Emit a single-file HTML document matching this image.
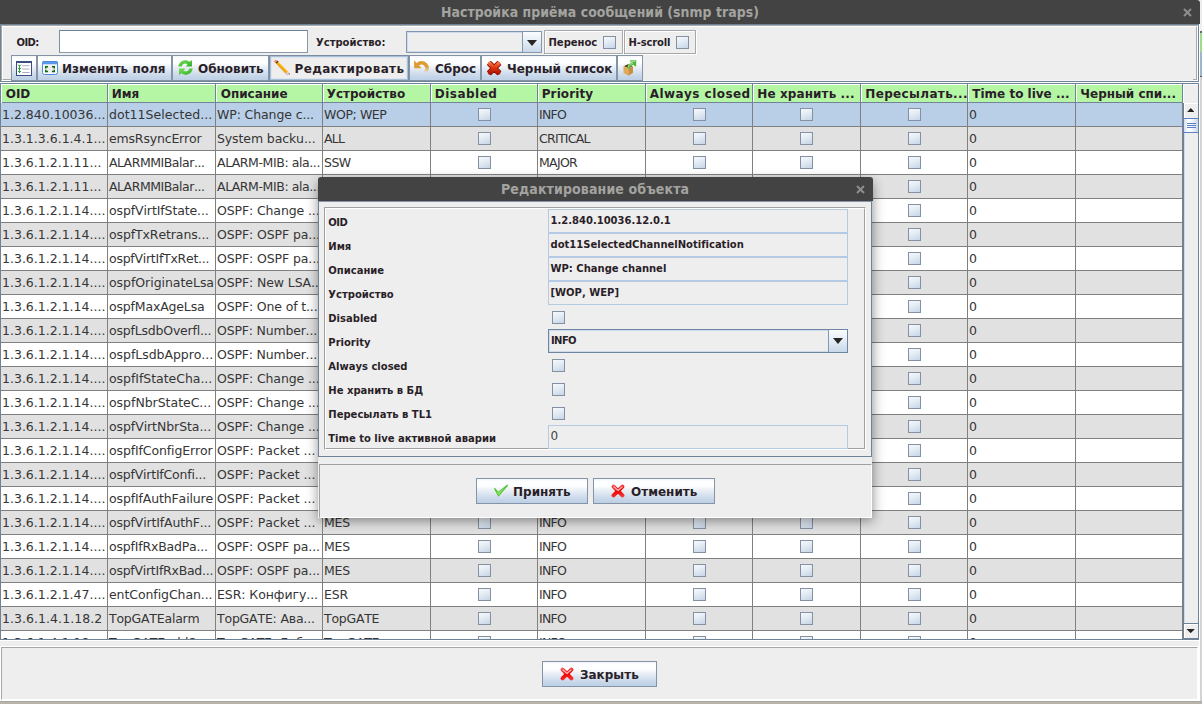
<!DOCTYPE html>
<html lang="ru"><head><meta charset="utf-8"><title>Настройка приёма сообщений (snmp traps)</title>
<style>
*{box-sizing:border-box;margin:0;padding:0}
html,body{width:1202px;height:704px;overflow:hidden}
body{position:relative;font-kerning:none;font-variant-ligatures:none;background:#c4c4c4;font-family:"DejaVu Sans","Liberation Sans",sans-serif;color:#2a1e28;font-size:12px}
.abs{position:absolute}
#win{position:absolute;left:0;top:0;width:1200px;height:701px;background:#eeeeee;overflow:hidden}
.titlebar{position:absolute;left:0;top:0;width:1200px;height:24px;background:#434343;border-radius:0 3px 0 0;color:#a3a3a0;font-family:'DejaVu Sans Condensed','DejaVu Sans',sans-serif;font-weight:bold;font-size:13.900px;letter-spacing:0.050px;line-height:24px;white-space:nowrap}
.titlebar span{position:absolute;left:441px;top:0}
.closex{position:absolute;width:9px;height:9px}
.lbl{position:absolute;font-weight:bold;font-size:10px;line-height:12px;white-space:nowrap;color:#2a1e28}
.btn{position:absolute;height:26px;border:1px solid #8493a6;background:linear-gradient(#f2f5f9 0%,#fdfeff 10%,#fdfeff 30%,#eff3f8 42%,#dfe8f2 58%,#cfdcec 75%,#c3d4e8 90%,#bdd0e6 100%);font-weight:bold;font-size:12px;line-height:26px;white-space:nowrap;color:#2a1e28}
.btn span{position:absolute;top:0}
.btn svg{position:absolute}
.cb{display:block;width:13px;height:13px;border:1px solid #8391a3;background:linear-gradient(160deg,#f7f9fc 0%,#e3ebf4 45%,#c6d5e7 100%)}
/* table */
.tbl{position:absolute;left:0;top:83px;width:1199px;height:557px;border:1px solid #6f8397;background:#fff;overflow:hidden}
.thead{position:absolute;left:0;top:0;height:19px;width:1197px;background:#eee;border-top:1px solid #fff;border-left:1px solid #fff}
.th{position:absolute;top:-1px;height:19px;background:#b5f6a5;border-right:1px solid #6f8397;border-bottom:1px solid #72839a;box-shadow:inset 0 1px 0 #fff;font-weight:bold;font-size:12px;line-height:17px;white-space:nowrap;overflow:hidden;color:#2a1e28}
.th+.th{box-shadow:inset 1px 1px 0 #fff}
.th span{position:absolute;left:3.700px;top:2px}
.tr{position:absolute;left:0;height:24px;width:1182px}
.tr.even{background:#ffffff}
.tr.odd{background:#e1e1e1}
.tr.sel{background:#b9cfe7}
.td{position:absolute;top:0;height:24px;border-right:1px solid #808080;border-bottom:1px solid #808080;font-size:12.5px;line-height:23px;white-space:nowrap;overflow:hidden;color:#353535}
.td span{position:absolute;left:1px;top:0}
.td.c .cb{position:absolute;left:47px;top:5px}
#desk{position:absolute;left:0;top:0;width:1202px;height:704px;background:linear-gradient(#eee 0,#eee 31px,#667 31px,#667 33px,#9fdc90 33px,#9fdc90 52px,#9db5d0 52px,#9db5d0 76px,#555 76px,#555 77px,#d4d4d4 77px) 1200px 0/2px 701px no-repeat,linear-gradient(#a8a8a4,#a8a8a4) 0 701px/1202px 1px no-repeat,#b8b4aa}
.combo{position:absolute;border:1px solid #8297b0;background:#eeeeee;box-shadow:inset 0 0 0 1px #cfdbe8}
.combo .arr{position:absolute;right:0;top:0;bottom:0;width:19px;border-left:1px solid #8297b0;background:linear-gradient(#fbfcfe,#e4ecf5 50%,#c9d8ea)}
.combo .arr:after{content:"";position:absolute;left:4px;top:8px;border:5.500px solid transparent;border-top:6px solid #262626;border-bottom:0}
.etch{position:absolute;border:1px solid #a8a8a8;box-shadow:inset 1px 1px 0 #fff,1px 1px 0 #fff}
.btn.foc{background:#eeeeee;border-color:#7b8da2;box-shadow:inset 0 0 0 1px #a8c0da,inset 0 0 0 2px #dde5ee}
#dlg{position:absolute;left:318px;top:177px;width:555px;height:341px}
#dlg:before{content:"";position:absolute;left:1px;top:3px;right:1px;bottom:0;box-shadow:0 2px 12px 1px rgba(0,0,0,0.42);border-radius:4px 4px 0 0}
.dtitle{position:absolute;left:0;top:0;width:555px;height:24px;background:#434343;border-radius:3px 3px 0 0;color:#a3a3a0;font-family:'DejaVu Sans Condensed','DejaVu Sans',sans-serif;font-weight:bold;font-size:14px;letter-spacing:0.120px;line-height:24px;white-space:nowrap}
.dtitle span{position:absolute;left:183px;top:0}
.dbody{position:absolute;left:0;top:24px;width:554px;height:256px;background:#eee;border:1px solid #6f8397;border-top-color:#8495a8}
.dfoot{position:absolute;left:0;top:280px;width:554px;height:61px;background:#eee}
.fld{position:absolute;left:229px;width:300px;height:24px;border:1px solid #b4cbe3;margin-top:0}
.fld span{position:absolute;left:1.500px;top:5px;font-weight:bold;font-size:10px;line-height:12px;white-space:nowrap;color:#2a1e28}

</style></head>
<body>
<div id="desk"></div>
<div id="win">
<div class="abs" style="left:1199px;top:24px;width:1px;height:677px;background:#fff"></div>
<div class="titlebar"><span>Настройка приёма сообщений (snmp traps)</span>
<svg class="closex" style="left:1183px;top:8px" viewBox="0 0 9 9"><path d="M1 1L8 8M8 1L1 8" stroke="#8e8e8c" stroke-width="2" fill="none"/></svg>
</div>
<!-- top panel -->
<div class="abs" style="left:0;top:24px;width:1199px;height:58px;border:1px solid #6f8397"></div>
<div class="abs" style="left:1px;top:25px;width:1197px;height:56px;border:1px solid;border-color:#a8a8a8 #fff #fff #a8a8a8"></div>
<div class="abs" style="left:2px;top:26px;width:1195px;height:54px;border:1px solid;border-color:#fff #a8a8a8 #a8a8a8 #fff"></div>
<div class="abs" style="left:11px;top:55px;width:1182px;height:26px;background:#eee;border-bottom:1px solid #f6f6f6"></div>
<div class="lbl" style="left:16.500px;top:36.500px;letter-spacing:-0.600px">OID:</div>
<div class="abs" style="left:59px;top:30px;width:249px;height:23px;background:#fff;border:1px solid #8a98a8;border-top-color:#6c7f93;border-left-color:#7a8c9f"></div>
<div class="lbl" style="left:316px;top:36.500px">Устройство:</div>
<div class="combo" style="left:406px;top:31px;width:136px;height:22px"><i class="arr"></i></div>
<div class="etch" style="left:544px;top:30px;width:79px;height:24px"></div>
<div class="lbl" style="left:548.500px;top:36.500px">Перенос</div>
<i class="cb abs" style="left:603px;top:36px"></i>
<div class="etch" style="left:624px;top:30px;width:72px;height:24px"></div>
<div class="lbl" style="left:628.500px;top:36.500px;letter-spacing:-0.150px">H-scroll</div>
<i class="cb abs" style="left:676px;top:36px"></i>
<!-- toolbar -->
<div class="btn" style="left:11px;top:55px;width:26px">
<svg style="left:4px;top:5px" width="16" height="16" viewBox="0 0 16 16"><rect x="0.5" y="0.5" width="15" height="14" fill="#fff" stroke="#3d4b7d"/><rect x="0" y="0" width="16" height="2" fill="#3d4b7d"/><g stroke="#aaa9c9" stroke-width="1"><path d="M6.200 4.700h7.300M6.200 8h7.300M6.200 11.500h7.300"/></g><g stroke="#0b8a1c" stroke-width="0.900" fill="none"><path d="M2.100 3.700l1.400 1.500 1.400-1.500M2.100 6.900l1.400 1.500 1.400-1.500M2.100 10.100l1.400 1.500 1.400-1.500"/><path d="M3.500 4.500v7.500" stroke-width="0.800"/></g></svg></div>
<div class="btn" style="left:37px;top:55px;width:135px">
<svg style="left:4px;top:5px" width="16" height="14" viewBox="0 0 16 14"><rect x="0.5" y="0.5" width="15" height="13" rx="2" fill="#fff" stroke="#4a8be0"/><rect x="0.5" y="0.5" width="15" height="2.300" rx="1" fill="#5a9bef" stroke="#4a8be0"/><rect x="2.500" y="4.300" width="11" height="7.400" fill="#ececec"/><path d="M3.700 7.400v-1.700h2.300M12.300 7.400v-1.700h-2.300M3.700 8.800v1.700h2.300M12.300 8.800v1.700h-2.300" fill="none" stroke="#0a6a0a" stroke-width="1.400"/></svg>
<span style="left:24px">Изменить поля</span></div>
<div class="btn" style="left:172px;top:55px;width:97px">
<svg style="left:4.500px;top:4px" width="15" height="15" viewBox="0 0 15 15"><defs><linearGradient id="gg" x1="0" y1="0" x2="1" y2="1"><stop offset="0" stop-color="#7be05a"/><stop offset="1" stop-color="#2fae22"/></linearGradient></defs><g fill="url(#gg)"><path d="M0.300 6.600C0.800 2.800 3.800 0.300 7.300 0.300c1.700 0 3.100 0.600 4.200 1.500L14 0v6.600H7.600l2-2.200C9 3.900 8.200 3.600 7.300 3.600 5.600 3.600 4.200 4.700 3.700 6.600z"/><path d="M14.700 8.400C14.200 12.200 11.200 14.700 7.700 14.700c-1.700 0-3.100-0.600-4.200-1.500L1 15V8.400h6.400l-2 2.200c0.600 0.500 1.400 0.800 2.300 0.800 1.700 0 3.100-1.100 3.600-3z"/></g></svg>
<span style="left:25px">Обновить</span></div>
<div class="btn foc" style="left:269px;top:55px;width:140px">
<svg style="left:4px;top:3.400px" width="17" height="17" viewBox="0 0 17 17"><path d="M5 7l9 9" stroke="#bbb" stroke-width="2" opacity="0.6"/><path d="M2 2.500l11 11" stroke="#f3a400" stroke-width="3"/><path d="M2.600 1.900l11 11" stroke="#ffd24a" stroke-width="1"/><circle cx="1.800" cy="2.200" r="1.500" fill="#f58a6a"/><path d="M2.200 4.200l2-2" stroke="#333" stroke-width="1.200"/><path d="M12 14l2-2 1.800 3.800z" fill="#f1c9a0"/><path d="M14.500 14.700l0.800-0.800 0.700 2z" fill="#444"/></svg>
<span style="left:24.500px;letter-spacing:0.350px">Редактировать</span></div>
<div class="btn" style="left:409px;top:55px;width:72px">
<svg style="left:2px;top:2px" width="20" height="18" viewBox="0 0 20 18"><defs><linearGradient id="ug" gradientUnits="userSpaceOnUse" x1="0" y1="8.500" x2="0" y2="15.500"><stop offset="0" stop-color="#dd9b31"/><stop offset="1" stop-color="#e6a840" stop-opacity="0"/></linearGradient></defs><path d="M5.600 6.400A5.500 5.500 0 1 1 13.500 14.300" fill="none" stroke="url(#ug)" stroke-width="3.600"/><path d="M2.100 2.300V10.200H9.600z" fill="#dd9b31"/></svg>
<span style="left:25px">Сброс</span></div>
<div class="btn" style="left:481px;top:55px;width:136px">
<svg style="left:4px;top:4px" width="16" height="16" viewBox="0 0 16 16"><g transform="translate(8.150 8.100) rotate(45)"><path d="M-6.900 -2.300h4.600v-4.600h4.600v4.600h4.600v4.600h-4.600v4.600h-4.600v-4.600h-4.600z" fill="#e53c17" stroke="#8c0f00" stroke-width="1.300" stroke-linejoin="round"/></g><path d="M3.700 3.600L12.600 12.600M12.600 3.600L3.700 12.600" fill="none" stroke="url(#rxg)" stroke-width="3.900" stroke-linecap="round"/></svg>
<span style="left:25px">Черный список</span></div>
<div class="btn" style="left:617px;top:55px;width:26px">
<svg style="left:5px;top:4px" width="14" height="17" viewBox="0 0 14 17"><path d="M0.500 6.200L5 4.200 10 6.200 5.500 8.500z" fill="#5e3d17"/><path d="M0.500 6.200L5.500 8.500V15.700L0.500 12.700z" fill="#e0a955"/><path d="M5.500 8.500L10 6.200V12.700L5.500 15.700z" fill="#c98d3c"/><path d="M0.500 6.200L5.500 8.500 10 6.200" fill="none" stroke="#f0cf8a" stroke-width="0.500"/><path d="M4.300 8.300C4.300 5 6 3.300 8.600 2.900L6.900 1.200 7.300 0.200H13.200V6.100L12.200 6.500 10.500 4.800C8.500 5.200 7.300 6.400 6.900 8.900z" fill="#4fb83a"/><path d="M5.200 7.600C5.500 5.300 7 4 9.500 3.700L8.300 1.300H12.200" fill="none" stroke="#b9eaa6" stroke-width="0.900"/></svg></div>
<!-- separators row 81/82 -->
<div class="abs" style="left:0;top:82px;width:1199px;height:1px;background:#fff"></div>
<svg width="0" height="0" style="position:absolute"><defs>
<linearGradient id="rxg" gradientUnits="userSpaceOnUse" x1="0" y1="1" x2="0" y2="15"><stop offset="0" stop-color="#f58a62"/><stop offset="0.450" stop-color="#e23a12"/><stop offset="1" stop-color="#a50a00"/></linearGradient>
<g id="redx"><path d="M3.600 1.200L7.500 4.800 11.400 1.200 13.800 3.600 10.200 7.500 13.800 11.400 11.400 13.800 7.500 10.200 3.600 13.800 1.200 11.400 4.800 7.500 1.200 3.600z" fill="url(#rxg)" stroke="#8a0e00" stroke-width="1.300" stroke-linejoin="round"/></g>
</defs></svg>
<div class="tbl">
<div class="thead"><div class="th" style="left:0px;width:106px"><span>OID</span></div><div class="th" style="left:106px;width:108px"><span>Имя</span></div><div class="th" style="left:214px;width:107px"><span style="left:4.7px;">Описание</span></div><div class="th" style="left:321px;width:108px"><span>Устройство</span></div><div class="th" style="left:429px;width:107px"><span style="letter-spacing:0.5px;">Disabled</span></div><div class="th" style="left:536px;width:108px"><span style="letter-spacing:0.12px;">Priority</span></div><div class="th" style="left:644px;width:107px"><span style="letter-spacing:0.45px;">Always closed</span></div><div class="th" style="left:751px;width:108px"><span style="left:4.3px;letter-spacing:0.1px;">Не хранить ...</span></div><div class="th" style="left:859px;width:107px"><span style="left:4.3px;letter-spacing:0.35px;">Пересылать...</span></div><div class="th" style="left:966px;width:108px"><span style="left:4.3px;">Time to live ...</span></div><div class="th" style="left:1074px;width:107px"><span style="left:4.3px;">Черный спи...</span></div></div>
<div class="tr sel" style="top:19px"><div class="td" style="left:0px;width:107px"><span>1.2.840.10036...</span></div><div class="td" style="left:107px;width:108px"><span style="letter-spacing:0.044px">dot11Selected...</span></div><div class="td" style="left:215px;width:107px"><span style="letter-spacing:-0.115px">WP: Change c...</span></div><div class="td" style="left:322px;width:108px"><span style="letter-spacing:-0.402px">WOP; WEP</span></div><div class="td c" style="left:430px;width:107px"><i class="cb"></i></div><div class="td" style="left:537px;width:108px"><span style="letter-spacing:-0.72px">INFO</span></div><div class="td c" style="left:645px;width:107px"><i class="cb"></i></div><div class="td c" style="left:752px;width:108px"><i class="cb"></i></div><div class="td c" style="left:860px;width:107px"><i class="cb"></i></div><div class="td" style="left:967px;width:108px"><span style="letter-spacing:-0.453px">0</span></div><div class="td" style="left:1075px;width:107px"></div></div>
<div class="tr odd" style="top:43px"><div class="td" style="left:0px;width:107px"><span>1.3.1.3.6.1.4.1...</span></div><div class="td" style="left:107px;width:108px"><span style="letter-spacing:-0.172px">emsRsyncError</span></div><div class="td" style="left:215px;width:107px"><span style="letter-spacing:-0.109px">System backu...</span></div><div class="td" style="left:322px;width:108px"><span style="letter-spacing:-0.761px">ALL</span></div><div class="td c" style="left:430px;width:107px"><i class="cb"></i></div><div class="td" style="left:537px;width:108px"><span style="letter-spacing:-0.734px">CRITICAL</span></div><div class="td c" style="left:645px;width:107px"><i class="cb"></i></div><div class="td c" style="left:752px;width:108px"><i class="cb"></i></div><div class="td c" style="left:860px;width:107px"><i class="cb"></i></div><div class="td" style="left:967px;width:108px"><span style="letter-spacing:-0.453px">0</span></div><div class="td" style="left:1075px;width:107px"></div></div>
<div class="tr even" style="top:67px"><div class="td" style="left:0px;width:107px"><span>1.3.6.1.2.1.11...</span></div><div class="td" style="left:107px;width:108px"><span style="letter-spacing:-0.464px">ALARMMIBalar...</span></div><div class="td" style="left:215px;width:107px"><span style="letter-spacing:-0.412px">ALARM-MIB: ala...</span></div><div class="td" style="left:322px;width:108px"><span style="letter-spacing:-0.511px">SSW</span></div><div class="td c" style="left:430px;width:107px"><i class="cb"></i></div><div class="td" style="left:537px;width:108px"><span style="letter-spacing:-0.709px">MAJOR</span></div><div class="td c" style="left:645px;width:107px"><i class="cb"></i></div><div class="td c" style="left:752px;width:108px"><i class="cb"></i></div><div class="td c" style="left:860px;width:107px"><i class="cb"></i></div><div class="td" style="left:967px;width:108px"><span style="letter-spacing:-0.453px">0</span></div><div class="td" style="left:1075px;width:107px"></div></div>
<div class="tr odd" style="top:91px"><div class="td" style="left:0px;width:107px"><span>1.3.6.1.2.1.11...</span></div><div class="td" style="left:107px;width:108px"><span style="letter-spacing:-0.464px">ALARMMIBalar...</span></div><div class="td" style="left:215px;width:107px"><span style="letter-spacing:-0.412px">ALARM-MIB: ala...</span></div><div class="td" style="left:322px;width:108px"><span style="letter-spacing:-0.511px">SSW</span></div><div class="td c" style="left:430px;width:107px"><i class="cb"></i></div><div class="td" style="left:537px;width:108px"><span style="letter-spacing:-0.709px">MAJOR</span></div><div class="td c" style="left:645px;width:107px"><i class="cb"></i></div><div class="td c" style="left:752px;width:108px"><i class="cb"></i></div><div class="td c" style="left:860px;width:107px"><i class="cb"></i></div><div class="td" style="left:967px;width:108px"><span style="letter-spacing:-0.453px">0</span></div><div class="td" style="left:1075px;width:107px"></div></div>
<div class="tr even" style="top:115px"><div class="td" style="left:0px;width:107px"><span>1.3.6.1.2.1.14....</span></div><div class="td" style="left:107px;width:108px"><span style="letter-spacing:-0.109px">ospfVirtIfState...</span></div><div class="td" style="left:215px;width:107px"><span style="letter-spacing:-0.121px">OSPF: Change ...</span></div><div class="td" style="left:322px;width:108px"><span style="letter-spacing:-0.208px">MES</span></div><div class="td c" style="left:430px;width:107px"><i class="cb"></i></div><div class="td" style="left:537px;width:108px"><span style="letter-spacing:-0.72px">INFO</span></div><div class="td c" style="left:645px;width:107px"><i class="cb"></i></div><div class="td c" style="left:752px;width:108px"><i class="cb"></i></div><div class="td c" style="left:860px;width:107px"><i class="cb"></i></div><div class="td" style="left:967px;width:108px"><span style="letter-spacing:-0.453px">0</span></div><div class="td" style="left:1075px;width:107px"></div></div>
<div class="tr odd" style="top:139px"><div class="td" style="left:0px;width:107px"><span>1.3.6.1.2.1.14....</span></div><div class="td" style="left:107px;width:108px"><span style="letter-spacing:-0.111px">ospfTxRetrans...</span></div><div class="td" style="left:215px;width:107px"><span style="letter-spacing:-0.112px">OSPF: OSPF pa...</span></div><div class="td" style="left:322px;width:108px"><span style="letter-spacing:-0.208px">MES</span></div><div class="td c" style="left:430px;width:107px"><i class="cb"></i></div><div class="td" style="left:537px;width:108px"><span style="letter-spacing:-0.72px">INFO</span></div><div class="td c" style="left:645px;width:107px"><i class="cb"></i></div><div class="td c" style="left:752px;width:108px"><i class="cb"></i></div><div class="td c" style="left:860px;width:107px"><i class="cb"></i></div><div class="td" style="left:967px;width:108px"><span style="letter-spacing:-0.453px">0</span></div><div class="td" style="left:1075px;width:107px"></div></div>
<div class="tr even" style="top:163px"><div class="td" style="left:0px;width:107px"><span>1.3.6.1.2.1.14....</span></div><div class="td" style="left:107px;width:108px"><span style="letter-spacing:-0.261px">ospfVirtIfTxRet...</span></div><div class="td" style="left:215px;width:107px"><span style="letter-spacing:-0.112px">OSPF: OSPF pa...</span></div><div class="td" style="left:322px;width:108px"><span style="letter-spacing:-0.208px">MES</span></div><div class="td c" style="left:430px;width:107px"><i class="cb"></i></div><div class="td" style="left:537px;width:108px"><span style="letter-spacing:-0.72px">INFO</span></div><div class="td c" style="left:645px;width:107px"><i class="cb"></i></div><div class="td c" style="left:752px;width:108px"><i class="cb"></i></div><div class="td c" style="left:860px;width:107px"><i class="cb"></i></div><div class="td" style="left:967px;width:108px"><span style="letter-spacing:-0.453px">0</span></div><div class="td" style="left:1075px;width:107px"></div></div>
<div class="tr odd" style="top:187px"><div class="td" style="left:0px;width:107px"><span>1.3.6.1.2.1.14....</span></div><div class="td" style="left:107px;width:108px"><span style="letter-spacing:-0.042px">ospfOriginateLsa</span></div><div class="td" style="left:215px;width:107px"><span style="letter-spacing:-0.112px">OSPF: New LSA...</span></div><div class="td" style="left:322px;width:108px"><span style="letter-spacing:-0.208px">MES</span></div><div class="td c" style="left:430px;width:107px"><i class="cb"></i></div><div class="td" style="left:537px;width:108px"><span style="letter-spacing:-0.72px">INFO</span></div><div class="td c" style="left:645px;width:107px"><i class="cb"></i></div><div class="td c" style="left:752px;width:108px"><i class="cb"></i></div><div class="td c" style="left:860px;width:107px"><i class="cb"></i></div><div class="td" style="left:967px;width:108px"><span style="letter-spacing:-0.453px">0</span></div><div class="td" style="left:1075px;width:107px"></div></div>
<div class="tr even" style="top:211px"><div class="td" style="left:0px;width:107px"><span>1.3.6.1.2.1.14....</span></div><div class="td" style="left:107px;width:108px"><span style="letter-spacing:-0.166px">ospfMaxAgeLsa</span></div><div class="td" style="left:215px;width:107px"><span style="letter-spacing:-0.145px">OSPF: One of t...</span></div><div class="td" style="left:322px;width:108px"><span style="letter-spacing:-0.208px">MES</span></div><div class="td c" style="left:430px;width:107px"><i class="cb"></i></div><div class="td" style="left:537px;width:108px"><span style="letter-spacing:-0.72px">INFO</span></div><div class="td c" style="left:645px;width:107px"><i class="cb"></i></div><div class="td c" style="left:752px;width:108px"><i class="cb"></i></div><div class="td c" style="left:860px;width:107px"><i class="cb"></i></div><div class="td" style="left:967px;width:108px"><span style="letter-spacing:-0.453px">0</span></div><div class="td" style="left:1075px;width:107px"></div></div>
<div class="tr odd" style="top:235px"><div class="td" style="left:0px;width:107px"><span>1.3.6.1.2.1.14....</span></div><div class="td" style="left:107px;width:108px"><span style="letter-spacing:-0.2px">ospfLsdbOverfl...</span></div><div class="td" style="left:215px;width:107px"><span style="letter-spacing:-0.19px">OSPF: Number...</span></div><div class="td" style="left:322px;width:108px"><span style="letter-spacing:-0.208px">MES</span></div><div class="td c" style="left:430px;width:107px"><i class="cb"></i></div><div class="td" style="left:537px;width:108px"><span style="letter-spacing:-0.72px">INFO</span></div><div class="td c" style="left:645px;width:107px"><i class="cb"></i></div><div class="td c" style="left:752px;width:108px"><i class="cb"></i></div><div class="td c" style="left:860px;width:107px"><i class="cb"></i></div><div class="td" style="left:967px;width:108px"><span style="letter-spacing:-0.453px">0</span></div><div class="td" style="left:1075px;width:107px"></div></div>
<div class="tr even" style="top:259px"><div class="td" style="left:0px;width:107px"><span>1.3.6.1.2.1.14....</span></div><div class="td" style="left:107px;width:108px"><span style="letter-spacing:-0.054px">ospfLsdbAppro...</span></div><div class="td" style="left:215px;width:107px"><span style="letter-spacing:-0.19px">OSPF: Number...</span></div><div class="td" style="left:322px;width:108px"><span style="letter-spacing:-0.208px">MES</span></div><div class="td c" style="left:430px;width:107px"><i class="cb"></i></div><div class="td" style="left:537px;width:108px"><span style="letter-spacing:-0.72px">INFO</span></div><div class="td c" style="left:645px;width:107px"><i class="cb"></i></div><div class="td c" style="left:752px;width:108px"><i class="cb"></i></div><div class="td c" style="left:860px;width:107px"><i class="cb"></i></div><div class="td" style="left:967px;width:108px"><span style="letter-spacing:-0.453px">0</span></div><div class="td" style="left:1075px;width:107px"></div></div>
<div class="tr odd" style="top:283px"><div class="td" style="left:0px;width:107px"><span>1.3.6.1.2.1.14....</span></div><div class="td" style="left:107px;width:108px"><span style="letter-spacing:-0.042px">ospfIfStateCha...</span></div><div class="td" style="left:215px;width:107px"><span style="letter-spacing:-0.121px">OSPF: Change ...</span></div><div class="td" style="left:322px;width:108px"><span style="letter-spacing:-0.208px">MES</span></div><div class="td c" style="left:430px;width:107px"><i class="cb"></i></div><div class="td" style="left:537px;width:108px"><span style="letter-spacing:-0.72px">INFO</span></div><div class="td c" style="left:645px;width:107px"><i class="cb"></i></div><div class="td c" style="left:752px;width:108px"><i class="cb"></i></div><div class="td c" style="left:860px;width:107px"><i class="cb"></i></div><div class="td" style="left:967px;width:108px"><span style="letter-spacing:-0.453px">0</span></div><div class="td" style="left:1075px;width:107px"></div></div>
<div class="tr even" style="top:307px"><div class="td" style="left:0px;width:107px"><span>1.3.6.1.2.1.14....</span></div><div class="td" style="left:107px;width:108px"><span style="letter-spacing:-0.029px">ospfNbrStateC...</span></div><div class="td" style="left:215px;width:107px"><span style="letter-spacing:-0.121px">OSPF: Change ...</span></div><div class="td" style="left:322px;width:108px"><span style="letter-spacing:-0.208px">MES</span></div><div class="td c" style="left:430px;width:107px"><i class="cb"></i></div><div class="td" style="left:537px;width:108px"><span style="letter-spacing:-0.72px">INFO</span></div><div class="td c" style="left:645px;width:107px"><i class="cb"></i></div><div class="td c" style="left:752px;width:108px"><i class="cb"></i></div><div class="td c" style="left:860px;width:107px"><i class="cb"></i></div><div class="td" style="left:967px;width:108px"><span style="letter-spacing:-0.453px">0</span></div><div class="td" style="left:1075px;width:107px"></div></div>
<div class="tr odd" style="top:331px"><div class="td" style="left:0px;width:107px"><span>1.3.6.1.2.1.14....</span></div><div class="td" style="left:107px;width:108px"><span style="letter-spacing:-0.077px">ospfVirtNbrSta...</span></div><div class="td" style="left:215px;width:107px"><span style="letter-spacing:-0.121px">OSPF: Change ...</span></div><div class="td" style="left:322px;width:108px"><span style="letter-spacing:-0.208px">MES</span></div><div class="td c" style="left:430px;width:107px"><i class="cb"></i></div><div class="td" style="left:537px;width:108px"><span style="letter-spacing:-0.72px">INFO</span></div><div class="td c" style="left:645px;width:107px"><i class="cb"></i></div><div class="td c" style="left:752px;width:108px"><i class="cb"></i></div><div class="td c" style="left:860px;width:107px"><i class="cb"></i></div><div class="td" style="left:967px;width:108px"><span style="letter-spacing:-0.453px">0</span></div><div class="td" style="left:1075px;width:107px"></div></div>
<div class="tr even" style="top:355px"><div class="td" style="left:0px;width:107px"><span>1.3.6.1.2.1.14....</span></div><div class="td" style="left:107px;width:108px"><span style="letter-spacing:-0.121px">ospfIfConfigError</span></div><div class="td" style="left:215px;width:107px"><span>OSPF: Packet ...</span></div><div class="td" style="left:322px;width:108px"><span style="letter-spacing:-0.208px">MES</span></div><div class="td c" style="left:430px;width:107px"><i class="cb"></i></div><div class="td" style="left:537px;width:108px"><span style="letter-spacing:-0.72px">INFO</span></div><div class="td c" style="left:645px;width:107px"><i class="cb"></i></div><div class="td c" style="left:752px;width:108px"><i class="cb"></i></div><div class="td c" style="left:860px;width:107px"><i class="cb"></i></div><div class="td" style="left:967px;width:108px"><span style="letter-spacing:-0.453px">0</span></div><div class="td" style="left:1075px;width:107px"></div></div>
<div class="tr odd" style="top:379px"><div class="td" style="left:0px;width:107px"><span>1.3.6.1.2.1.14....</span></div><div class="td" style="left:107px;width:108px"><span style="letter-spacing:-0.208px">ospfVirtIfConfi...</span></div><div class="td" style="left:215px;width:107px"><span>OSPF: Packet ...</span></div><div class="td" style="left:322px;width:108px"><span style="letter-spacing:-0.208px">MES</span></div><div class="td c" style="left:430px;width:107px"><i class="cb"></i></div><div class="td" style="left:537px;width:108px"><span style="letter-spacing:-0.72px">INFO</span></div><div class="td c" style="left:645px;width:107px"><i class="cb"></i></div><div class="td c" style="left:752px;width:108px"><i class="cb"></i></div><div class="td c" style="left:860px;width:107px"><i class="cb"></i></div><div class="td" style="left:967px;width:108px"><span style="letter-spacing:-0.453px">0</span></div><div class="td" style="left:1075px;width:107px"></div></div>
<div class="tr even" style="top:403px"><div class="td" style="left:0px;width:107px"><span>1.3.6.1.2.1.14....</span></div><div class="td" style="left:107px;width:108px"><span style="letter-spacing:-0.133px">ospfIfAuthFailure</span></div><div class="td" style="left:215px;width:107px"><span>OSPF: Packet ...</span></div><div class="td" style="left:322px;width:108px"><span style="letter-spacing:-0.208px">MES</span></div><div class="td c" style="left:430px;width:107px"><i class="cb"></i></div><div class="td" style="left:537px;width:108px"><span style="letter-spacing:-0.72px">INFO</span></div><div class="td c" style="left:645px;width:107px"><i class="cb"></i></div><div class="td c" style="left:752px;width:108px"><i class="cb"></i></div><div class="td c" style="left:860px;width:107px"><i class="cb"></i></div><div class="td" style="left:967px;width:108px"><span style="letter-spacing:-0.453px">0</span></div><div class="td" style="left:1075px;width:107px"></div></div>
<div class="tr odd" style="top:427px"><div class="td" style="left:0px;width:107px"><span>1.3.6.1.2.1.14....</span></div><div class="td" style="left:107px;width:108px"><span style="letter-spacing:-0.16px">ospfVirtIfAuthF...</span></div><div class="td" style="left:215px;width:107px"><span>OSPF: Packet ...</span></div><div class="td" style="left:322px;width:108px"><span style="letter-spacing:-0.208px">MES</span></div><div class="td c" style="left:430px;width:107px"><i class="cb"></i></div><div class="td" style="left:537px;width:108px"><span style="letter-spacing:-0.72px">INFO</span></div><div class="td c" style="left:645px;width:107px"><i class="cb"></i></div><div class="td c" style="left:752px;width:108px"><i class="cb"></i></div><div class="td c" style="left:860px;width:107px"><i class="cb"></i></div><div class="td" style="left:967px;width:108px"><span style="letter-spacing:-0.453px">0</span></div><div class="td" style="left:1075px;width:107px"></div></div>
<div class="tr even" style="top:451px"><div class="td" style="left:0px;width:107px"><span>1.3.6.1.2.1.14....</span></div><div class="td" style="left:107px;width:108px"><span style="letter-spacing:-0.191px">ospfIfRxBadPa...</span></div><div class="td" style="left:215px;width:107px"><span style="letter-spacing:-0.112px">OSPF: OSPF pa...</span></div><div class="td" style="left:322px;width:108px"><span style="letter-spacing:-0.208px">MES</span></div><div class="td c" style="left:430px;width:107px"><i class="cb"></i></div><div class="td" style="left:537px;width:108px"><span style="letter-spacing:-0.72px">INFO</span></div><div class="td c" style="left:645px;width:107px"><i class="cb"></i></div><div class="td c" style="left:752px;width:108px"><i class="cb"></i></div><div class="td c" style="left:860px;width:107px"><i class="cb"></i></div><div class="td" style="left:967px;width:108px"><span style="letter-spacing:-0.453px">0</span></div><div class="td" style="left:1075px;width:107px"></div></div>
<div class="tr odd" style="top:475px"><div class="td" style="left:0px;width:107px"><span>1.3.6.1.2.1.14....</span></div><div class="td" style="left:107px;width:108px"><span style="letter-spacing:-0.257px">ospfVirtIfRxBad...</span></div><div class="td" style="left:215px;width:107px"><span style="letter-spacing:-0.112px">OSPF: OSPF pa...</span></div><div class="td" style="left:322px;width:108px"><span style="letter-spacing:-0.208px">MES</span></div><div class="td c" style="left:430px;width:107px"><i class="cb"></i></div><div class="td" style="left:537px;width:108px"><span style="letter-spacing:-0.72px">INFO</span></div><div class="td c" style="left:645px;width:107px"><i class="cb"></i></div><div class="td c" style="left:752px;width:108px"><i class="cb"></i></div><div class="td c" style="left:860px;width:107px"><i class="cb"></i></div><div class="td" style="left:967px;width:108px"><span style="letter-spacing:-0.453px">0</span></div><div class="td" style="left:1075px;width:107px"></div></div>
<div class="tr even" style="top:499px"><div class="td" style="left:0px;width:107px"><span>1.3.6.1.2.1.47....</span></div><div class="td" style="left:107px;width:108px"><span style="letter-spacing:-0.08px">entConfigChan...</span></div><div class="td" style="left:215px;width:107px"><span style="letter-spacing:-0.073px">ESR: Конфигу...</span></div><div class="td" style="left:322px;width:108px"><span style="letter-spacing:-0.177px">ESR</span></div><div class="td c" style="left:430px;width:107px"><i class="cb"></i></div><div class="td" style="left:537px;width:108px"><span style="letter-spacing:-0.72px">INFO</span></div><div class="td c" style="left:645px;width:107px"><i class="cb"></i></div><div class="td c" style="left:752px;width:108px"><i class="cb"></i></div><div class="td c" style="left:860px;width:107px"><i class="cb"></i></div><div class="td" style="left:967px;width:108px"><span style="letter-spacing:-0.453px">0</span></div><div class="td" style="left:1075px;width:107px"></div></div>
<div class="tr odd" style="top:523px"><div class="td" style="left:0px;width:107px"><span style="letter-spacing:0.051px">1.3.6.1.4.1.18.2</span></div><div class="td" style="left:107px;width:108px"><span style="letter-spacing:-0.219px">TopGATEalarm</span></div><div class="td" style="left:215px;width:107px"><span style="letter-spacing:-0.199px">TopGATE: Ава...</span></div><div class="td" style="left:322px;width:108px"><span style="letter-spacing:-0.245px">TopGATE</span></div><div class="td c" style="left:430px;width:107px"><i class="cb"></i></div><div class="td" style="left:537px;width:108px"><span style="letter-spacing:-0.72px">INFO</span></div><div class="td c" style="left:645px;width:107px"><i class="cb"></i></div><div class="td c" style="left:752px;width:108px"><i class="cb"></i></div><div class="td c" style="left:860px;width:107px"><i class="cb"></i></div><div class="td" style="left:967px;width:108px"><span style="letter-spacing:-0.453px">0</span></div><div class="td" style="left:1075px;width:107px"></div></div>
<div class="tr even" style="top:547px"><div class="td" style="left:0px;width:107px"><span>1.3.6.1.4.1.18....</span></div><div class="td" style="left:107px;width:108px"><span style="letter-spacing:-0.121px">TopGATEaddSu...</span></div><div class="td" style="left:215px;width:107px"><span style="letter-spacing:-0.358px">TopGATE: Добл...</span></div><div class="td" style="left:322px;width:108px"><span style="letter-spacing:-0.245px">TopGATE</span></div><div class="td c" style="left:430px;width:107px"><i class="cb"></i></div><div class="td" style="left:537px;width:108px"><span style="letter-spacing:-0.72px">INFO</span></div><div class="td c" style="left:645px;width:107px"><i class="cb"></i></div><div class="td c" style="left:752px;width:108px"><i class="cb"></i></div><div class="td c" style="left:860px;width:107px"><i class="cb"></i></div><div class="td" style="left:967px;width:108px"><span style="letter-spacing:-0.453px">0</span></div><div class="td" style="left:1075px;width:107px"></div></div>
<div class="abs" style="left:1182px;top:0;width:15px;height:555px;background:#eee"></div>
<div class="abs" style="left:1182px;top:0;width:1px;height:19px;background:#fafafa"></div>
<div class="abs" style="left:1182px;top:0;width:15px;height:1px;background:#fafafa"></div>
<div class="abs" style="left:1182px;top:19px;width:1px;height:536px;background:#6f8397"></div>
<div class="abs" style="left:1183px;top:19px;width:1px;height:536px;background:#c8dcf0"></div>
<div class="abs" style="left:1183px;top:19px;width:14px;height:15px;background:#eee;border-top:1px solid #fff;border-left:1px solid #fff"></div>
<svg class="abs" style="left:1185.600px;top:23.800px" width="7.600" height="4.200" viewBox="0 0 9 5"><path d="M0 5L4.500 0 9 5z" fill="#222"/></svg>
<div class="abs" style="left:1182px;top:34px;width:16px;height:15px;border:1px solid #5f82c4;background:linear-gradient(90deg,#cfdff0 0%,#ffffff 30%,#f4f8fc 55%,#c4d8ee 100%)"></div>
<div class="abs" style="left:1186px;top:39px;width:9px;height:5px;border-top:1px solid #5b7fc7;border-bottom:1px solid #5b7fc7"><div style="height:1px;margin-top:1px;background:#5b7fc7"></div></div>
<div class="abs" style="left:1183px;top:539px;width:14px;height:16px;background:#eee;border-top:1px solid #6f8397;border-bottom:1px solid #6f8397;box-shadow:inset 1px 1px 0 #fff"></div>
<svg class="abs" style="left:1185px;top:545px" width="9.400" height="4.200" viewBox="0 0 10 5"><path d="M0 0L5 5 10 0z" fill="#222"/></svg>
</div>
<!-- bottom panel -->
<div class="abs" style="left:0;top:640px;width:1199px;height:1px;background:#fff"></div>
<div class="abs" style="left:0;top:646px;width:1199px;height:55px;border:1px solid #fff"></div>
<div class="abs" style="left:1px;top:647px;width:1197px;height:53px;border:1px solid;border-color:#a6a6a6 #fff #fff #a6a6a6"></div>
<div class="btn" style="left:542px;top:661px;width:115px">
<svg style="left:17px;top:5px" width="14" height="14" viewBox="0 0 14 14"><use href="#redx2"/></svg>
<span style="left:37px">Закрыть</span></div>
<!-- dialog -->
<div id="dlg">
<div class="dtitle"><span>Редактирование объекта</span>
<svg class="closex" style="left:538px;top:8px" viewBox="0 0 9 9"><path d="M1 1L8 8M8 1L1 8" stroke="#8e8e8c" stroke-width="2" fill="none"/></svg></div>
<div class="dbody">
<div class="abs" style="left:5px;top:5px;width:542px;height:243px;border:1px solid;border-color:#a0a0a0 #fff #fff #a0a0a0"></div>
<div class="abs" style="left:6px;top:6px;width:540px;height:241px;border:1px solid;border-color:#fff #a0a0a0 #a0a0a0 #fff"></div>
<div class="lbl" style="left:9.300px;top:14.7px;letter-spacing:-0.500px">OID</div>
<div class="lbl" style="left:9.300px;top:38.7px">Имя</div>
<div class="lbl" style="left:9.300px;top:62.7px">Описание</div>
<div class="lbl" style="left:9.300px;top:86.7px">Устройство</div>
<div class="lbl" style="left:9.300px;top:110.7px">Disabled</div>
<div class="lbl" style="left:9.300px;top:134.7px">Priority</div>
<div class="lbl" style="left:9.300px;top:158.7px">Always closed</div>
<div class="lbl" style="left:9.300px;top:182.7px">Не хранить в БД</div>
<div class="lbl" style="left:9.300px;top:206.7px">Пересылать в TL1</div>
<div class="lbl" style="left:9.300px;top:230.7px">Time to live активной аварии</div>
<div class="fld" style="top:7px"><span>1.2.840.10036.12.0.1</span></div>
<div class="fld" style="top:31px"><span>dot11SelectedChannelNotification</span></div>
<div class="fld" style="top:55px"><span>WP: Change channel</span></div>
<div class="fld" style="top:79px"><span>[WOP, WEP]</span></div>
<i class="cb abs" style="left:233px;top:109px"></i>
<div class="combo" style="left:229px;top:127px;width:300px;height:24px;border-color:#6d86a4"><span class="lbl" style="left:2px;top:5px;letter-spacing:-0.600px">INFO</span><i class="arr"></i></div>
<i class="cb abs" style="left:233px;top:157px"></i>
<i class="cb abs" style="left:233px;top:181px"></i>
<i class="cb abs" style="left:233px;top:205px"></i>
<div class="fld" style="top:223px"><span style="font-weight:normal;font-size:12px;color:#444;top:4px">0</span></div>
</div>
<div class="dfoot">
<div class="abs" style="left:1px;top:7px;width:553px;height:54px;border:1px solid;border-color:#a0a0a0 #fff #fff #a0a0a0"></div>
<div class="btn" style="left:158px;top:21px;width:112px">
<svg style="left:17px;top:5px" width="15" height="14" viewBox="0 0 15 14"><path d="M0 4.800L0.900 3.800 4.200 7.700 13.300 0.600 14.200 1.400 4.400 12.800z" fill="#52c432"/><path d="M2.200 6.500L4.300 8.800 11.500 3 4.500 11z" fill="#8fe466"/></svg>
<span style="left:36px">Принять</span></div>
<div class="btn" style="left:275px;top:21px;width:122px">
<svg style="left:17px;top:5px" width="14" height="14" viewBox="0 0 14 14"><use href="#redx2"/></svg>
<span style="left:37px">Отменить</span></div>
</div>
</div>
<svg width="0" height="0" style="position:absolute"><defs>
<linearGradient id="rxg2" gradientUnits="userSpaceOnUse" x1="0" y1="0" x2="3" y2="14"><stop offset="0" stop-color="#f46a6a"/><stop offset="0.450" stop-color="#ee1a1a"/><stop offset="0.550" stop-color="#f00000"/><stop offset="1" stop-color="#f03838"/></linearGradient>
<g id="redx2"><path d="M2.600 2.600L11.400 11.400M11.400 2.600L2.600 11.400" fill="none" stroke="url(#rxg2)" stroke-width="4" stroke-linecap="round"/><path d="M3 2.900L7 6.600 11 2.900" fill="none" stroke="#ffc8c8" stroke-width="1.300" stroke-linecap="round" stroke-linejoin="round" opacity="0.85"/></g>
</defs></svg>
</div>
</body></html>
